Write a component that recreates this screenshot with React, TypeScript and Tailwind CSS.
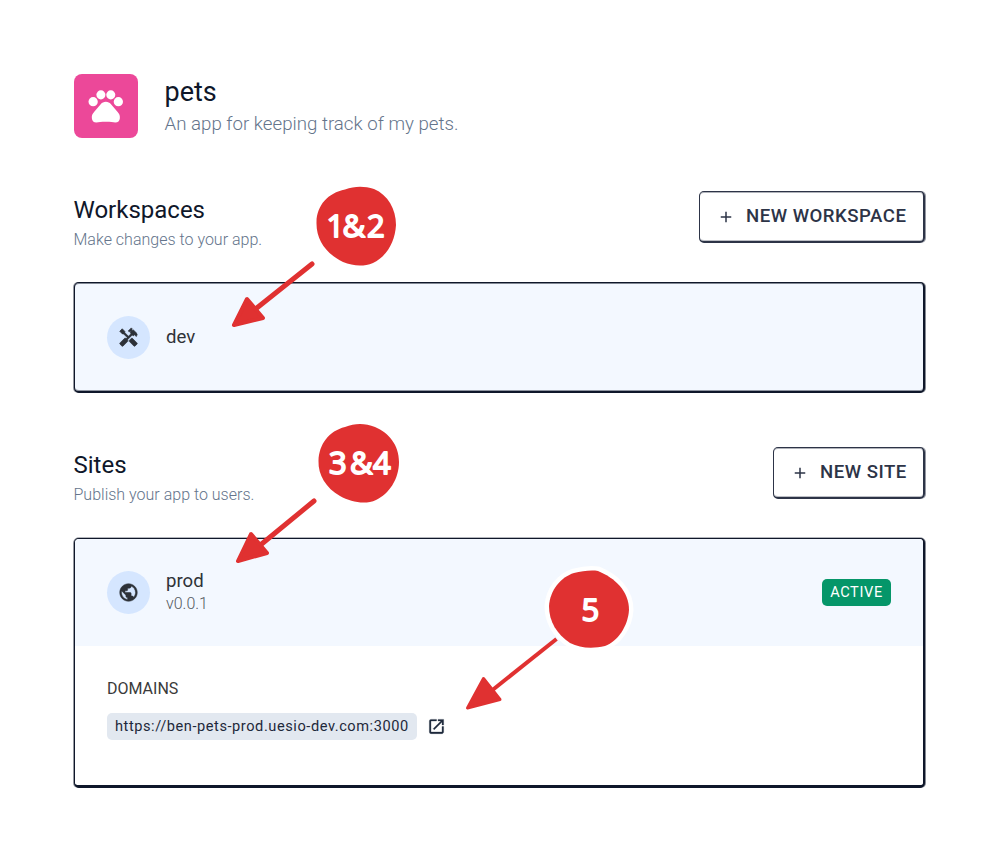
import type { ReactNode } from "react";
import { MdAdd, MdHandyman, MdOpenInNew, MdPublic } from "react-icons/md";

function PawIcon() {
  return (
    <svg viewBox="0 0 64 64" className="size-full" fill="white">
      <circle cx="19" cy="27.5" r="4.6" />
      <circle cx="26.7" cy="20.7" r="4.5" />
      <circle cx="36.500" cy="20.7" r="4.5" />
      <circle cx="44" cy="27.5" r="4.6" />
      <path d="M31.600 27.500c-2.200 0-3.700.9-4.900 2.300l-6.800 8c-1.700 2-2.400 3.600-2.200 6 .2 2.600 1.900 4.300 4.500 4.300 2.400 0 4.500-.6 9.400-.6s7 .6 9.400.6c2.600 0 4.300-1.700 4.500-4.300.2-2.400-.5-4-2.200-6l-6.800-8c-1.200-1.400-2.700-2.300-4.900-2.300z" />
    </svg>
  );
}

interface SectionHeaderProps {
  title: string;
  text: string;
  action: string;
  width: string;
  inset: string;
}

function SectionHeader({ title, text, action, width, inset }: SectionHeaderProps) {
  return (
    <div className="flex h-[52px] items-start justify-between">
      <div className={`-ml-px pl-[0.5px] ${inset}`}>
        <h2 className="text-[24px] leading-[32px] text-[#0f172a]">{title}</h2>
        <p className="mt-[3px] text-[16px] leading-[22px] font-light tracking-[0.01px] text-[#64748b]">{text}</p>
      </div>
      <button
        className={`flex h-[52px] items-center rounded-[5px] border-t border-r-2 border-b-2 border-l border-[#2d3447] pl-[17px] text-[#2d3447] shadow-[inset_0_1px_0_#2d344760,inset_0_-1px_0_#2d344750,1px_0_0_#2d344780] ${width}`}
      >
        <MdAdd className="size-[18px] shrink-0" />
        <span className="ml-[11px] text-[18.6px] font-medium tracking-[0.5px] whitespace-nowrap">{action}</span>
      </button>
    </div>
  );
}

function Avatar({ children }: { children: ReactNode }) {
  return <div className="flex size-[43px] items-center justify-center rounded-full bg-[#d5e6ff] text-[#2d3138]">{children}</div>;
}

function Annotations() {
  return (
    <svg className="pointer-events-none absolute inset-0" width="997" height="860" viewBox="0 0 997 860">
      <g fill="#e03131">
        <path d="M345 189.500C355 186 364 186 374 189C388 195 396 209 396 225C395 242 387 256 373 263C363 267 353 266 343 262C327 254 316 241 316.500 222C317 205 328 193 345 189.500Z" />
        <path d="M345 427C355 423 365 423 375 427C389 433 399 445 399 462C399 479 389 494 376 500C365 505 351 502 340 496C326 488 318 475 318.500 461C319 444 329 431 345 427Z" />
        <path stroke="white" strokeWidth="9" paintOrder="stroke" strokeLinejoin="round" d="M574 573C582 571 591 570 598 571C615 578 629 591 629 610C628 626 618 641 605 646C592 649 580 648 570 643C557 634 549 622 549 606C550 590 561 577 574 573Z" />
      </g>
      <g stroke="#e03131" fill="#e03131" strokeLinecap="round" strokeLinejoin="round">
        <path strokeWidth="5" d="M312 264L253 311" />
        <path strokeWidth="4" d="M247 299L234 325L263 318Z" />
        <path strokeWidth="5" d="M314 501L258 547" />
        <path strokeWidth="4" d="M251 534L238 561L267 553Z" />
        <path strokeWidth="4" strokeLinecap="butt" d="M556.500 639L490 692" />
        <path strokeWidth="3" d="M483.500 678.500L467.500 708L500 699.500Z" />
      </g>
      <g fill="white" stroke="white" strokeWidth="1.800" strokeLinejoin="round" className="font-['Open_Sans',sans-serif] text-[31px] font-normal">
        <text y="236.500" x="326.500 342.500 367">1&amp;2</text>
        <text y="473.500" x="329 350 373">3&amp;4</text>
        <text y="620.500" x="581.500">5</text>
      </g>
    </svg>
  );
}

export default function App() {
  return (
    <main className="relative h-[860px] w-[997px] overflow-hidden bg-white pt-[73px] pr-[72px] pl-[74px] font-['Roboto',sans-serif]">
      <header className="-ml-[0.5px] flex h-[65px]">
        <div className="mt-[0.5px] size-[64.500px] shrink-0 rounded-[8px] bg-[#ec4899]">
          <PawIcon />
        </div>
        <div className="ml-[26.500px] pt-px">
          <h1 className="text-[27px] leading-[36px] text-[#0f172a]">pets</h1>
          <p className="mt-[1px] text-[18.7px] leading-[26px] font-light text-[#64748b]">An app for keeping track of my pets.</p>
        </div>
      </header>

      <section className="mt-[53px]">
        <SectionHeader title="Workspaces" text="Make changes to your app." action="NEW WORKSPACE" width="w-[226px]" inset="pt-[3px]" />
        <div className="mt-[39px] flex h-[111px] items-center rounded-[5px] border-t border-r-2 border-b-2 border-l border-[#0f172a] bg-[#f3f8ff] pl-[32px] shadow-[inset_0_1px_0_#0f172a80,inset_0_-1px_0_#0f172a70,1px_0_0_#0f172a80,-1px_0_0_#0f172a70]">
          <Avatar>
            <MdHandyman className="size-[21px] [&>path[fill=none]]:stroke-none" stroke="currentColor" strokeWidth="0.8" />
          </Avatar>
          <span className="mt-px ml-[16px] text-[18.6px] text-[#2f3338]">dev</span>
        </div>
      </section>

      <section className="mt-[54px]">
        <SectionHeader title="Sites" text="Publish your app to users." action="NEW SITE" width="w-[152px]" inset="pt-[2px]" />
        <div className="mt-[39px] h-[250px] rounded-[5px] border-t border-r-2 border-b-3 border-l border-[#0f172a] bg-white shadow-[1px_0_0_#0f172a80,-1px_0_0_#0f172a70,0_-1px_0_#0f172a50]">
          <div className="flex h-[107px] items-center rounded-t-[4px] bg-[#f3f8ff] pr-[32px] pl-[32px]">
            <Avatar>
              <MdPublic className="size-[21px] [&>path[fill=none]]:stroke-none" stroke="currentColor" strokeWidth="0.6" />
            </Avatar>
            <div className="-mt-[2px] ml-[16px]">
              <div className="text-[18.6px] leading-[24px] text-[#2f3338]">prod</div>
              <div className="text-[16px] leading-[21px] font-light text-[#555a61]">v0.0.1</div>
            </div>
            <span className="ml-auto flex h-[27px] w-[69px] items-center justify-center rounded-[5px] bg-[#059669] text-[14.6px] tracking-[0.6px] text-white">ACTIVE</span>
          </div>
          <div className="pt-[32px] pl-[32px]">
            <div className="text-[16px] leading-[22px] text-[#3a3a3a]">DOMAINS</div>
            <div className="mt-[13px] flex items-center">
              <span className="flex h-[27px] w-[310px] items-center rounded-[5px] bg-[#e2e8f0] pl-[8px] text-[14.6px] tracking-[0.56px] whitespace-nowrap text-[#1e293b]">https://ben-pets-prod.uesio-dev.com:3000</span>
              <MdOpenInNew className="ml-[10px] size-[19px] text-[#1e293b] [&>path[fill=none]]:stroke-none" stroke="currentColor" strokeWidth="0.4" />
            </div>
          </div>
        </div>
      </section>
      <Annotations />
    </main>
  );
}
